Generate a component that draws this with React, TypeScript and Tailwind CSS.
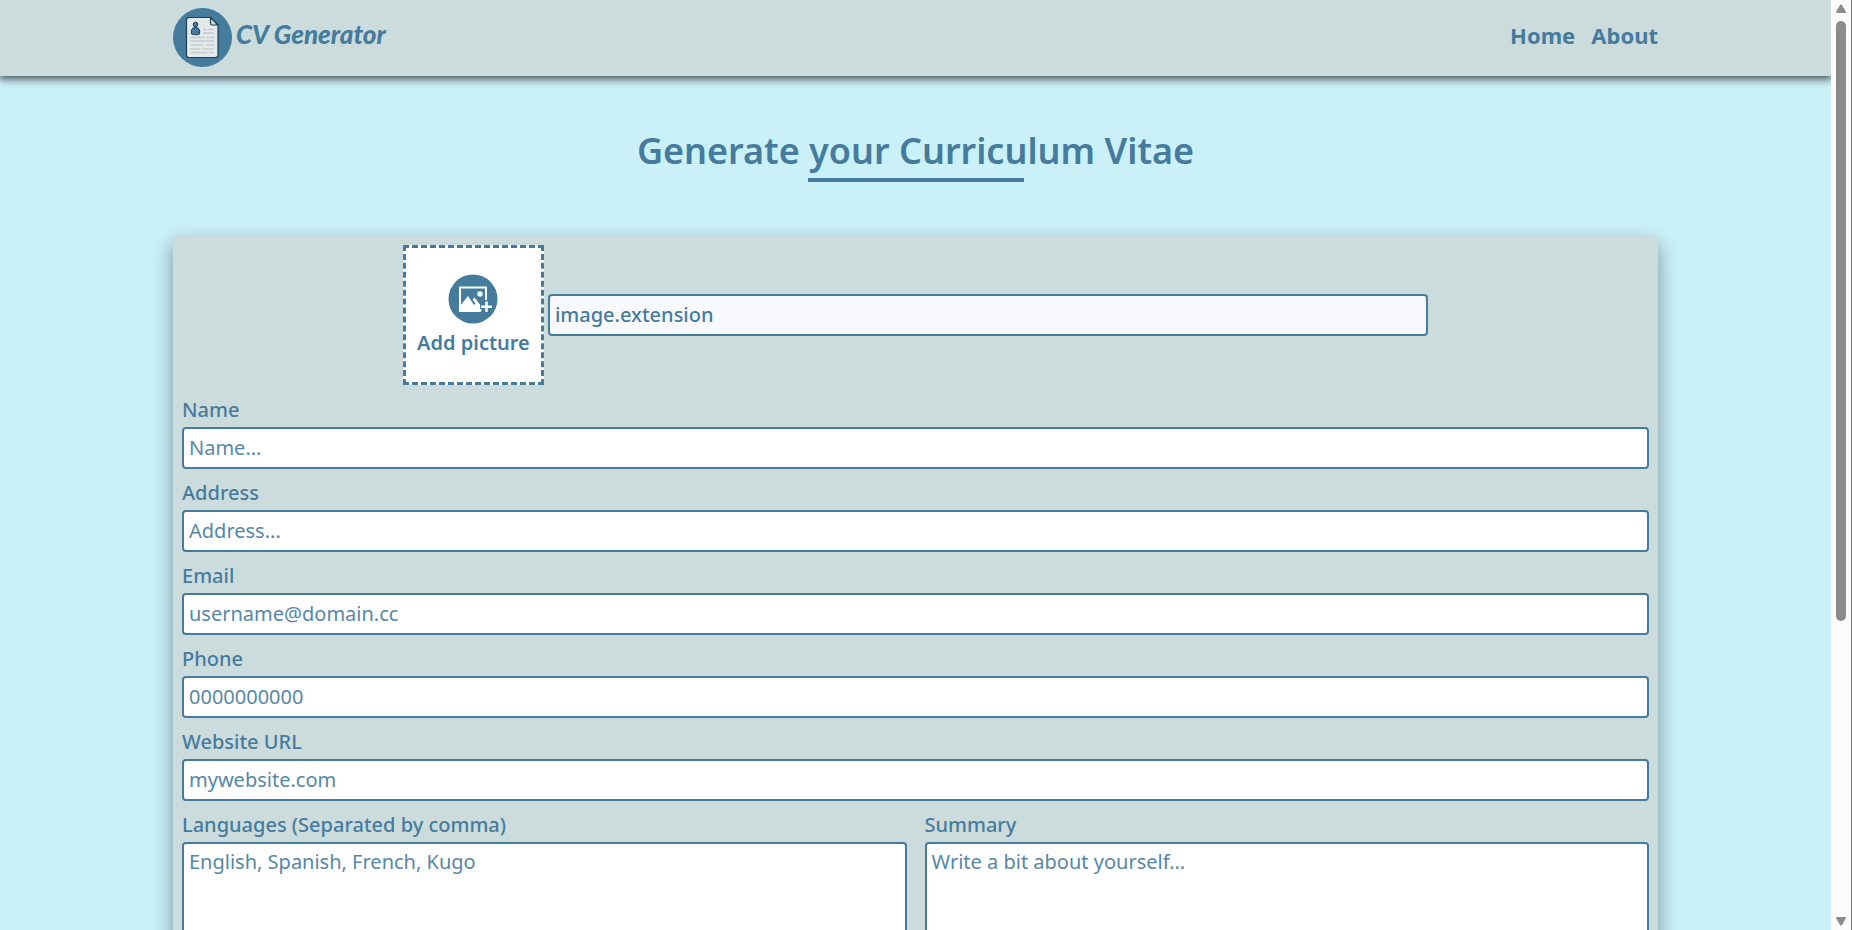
import React from "react";

const control =
  "block w-full rounded-[4px] border-2 border-[#457b9d] bg-white px-[5px] text-[20px] text-[#457b9d] placeholder:text-[#457b9d] placeholder:opacity-90 outline-none";
const labelStyle = "block h-[41px] pt-[9px] text-[20px] leading-[30px] font-medium";

function Logo() {
  return (
    <svg viewBox="0 0 59 59" className="size-[59px] shrink-0" aria-hidden="true">
      <circle cx="29.500" cy="29.500" r="29.500" fill="#457b9d" />
      <path d="M16 9.500h21.500l7.500 7.500v30a2.500 2.500 0 0 1-2.500 2.500H16a2.500 2.500 0 0 1-2.500-2.500V12A2.500 2.500 0 0 1 16 9.500Z" fill="#e4e9ea" stroke="#1d3f53" strokeWidth="1.200" />
      <path d="M37.500 9.500v6a1.500 1.500 0 0 0 1.500 1.500h6Z" fill="#ccdbdc" stroke="#1d3f53" strokeWidth="1.200" />
      <path d="M18.500 26c-.8-4 .7-6 2.500-6.300h3c1.800.3 3.300 2.300 2.500 6.300-2 1-6 1-8 0Z" fill="#457b9d" stroke="#1d3f53" strokeWidth="1" />
      <circle cx="22.500" cy="16.500" r="2.300" fill="#457b9d" stroke="#1d3f53" strokeWidth="1" />
      <path d="M30 21.500h3m1.500 0h6.500M30 25h11M17.500 29.500h14m2 0h7.500M17.500 33h23.500M17.500 37h13.500m2 0h8M17.500 41h10m2 0h11.500M17.500 44.500h17m2 0h4.500" stroke="#c3cbcd" strokeWidth="1.500" />
    </svg>
  );
}

function PictureIcon() {
  return (
    <svg viewBox="0 0 50 50" className="size-[50px]" aria-hidden="true">
      <circle cx="25" cy="25" r="24.500" fill="#457b9d" />
      <path d="M33 37H12V13.500h26V29" fill="none" stroke="#fff" strokeWidth="2" />
      <path d="M12 37v-5l8-10 6 9 1.500-1.500-3-4 2-2 7 9V37Z" fill="#fff" />
      <circle cx="32" cy="20" r="2.700" fill="#fff" />
      <path d="M38.500 26v13M32 32.500h13" stroke="#457b9d" strokeWidth="5" />
      <path d="M38.500 27.500v10.500M33 32.700h11" stroke="#fff" strokeWidth="2.500" />
    </svg>
  );
}

const fields = [
  { id: "name", label: "Name", type: "text", hint: "Name..." },
  { id: "address", label: "Address", type: "text", hint: "Address..." },
  { id: "email", label: "Email", type: "email", hint: "username@domain.cc" },
  { id: "phone", label: "Phone", type: "tel", hint: "0000000000" },
  { id: "website", label: "Website URL", type: "text", hint: "mywebsite.com" },
];

export default function App() {
  return (
    <div className="flex h-screen overflow-hidden bg-[#caf0f8] font-['Noto_Sans',sans-serif] text-[#457b9d]">
      <div className="min-w-0 flex-1 overflow-hidden">
        <header className="relative flex h-[76px] items-center justify-between bg-[#ccdbdc] px-[173px] pb-[2px] shadow-[0_2px_8px_1px_#000a]">
          <a href="#" className="flex items-center gap-1">
            <Logo />
            <span className="pb-[6px] font-['Lato',sans-serif] text-[26px] font-black italic">CV Generator</span>
          </a>
          <nav className="flex gap-4 pb-1 text-[22px] font-bold">
            <a href="#home">Home</a>
            <a href="#about">About</a>
          </nav>
        </header>
        <main className="px-[173px]">
          <div className="flex h-[160px] flex-col items-center pt-[48px]">
            <h1 className="text-[36px] leading-[54px] font-semibold">Generate your Curriculum Vitae</h1>
            <div className="h-1 w-[216px] bg-[#457b9d]" />
          </div>
          <form className="rounded-[5px] bg-[#ccdbdc] p-[9px] shadow-[0_8px_20px_#0006]">
            <div className="mb-px flex items-center justify-center gap-1">
              <button type="button" className="flex h-[140px] w-[141px] shrink-0 flex-col items-center justify-center gap-1 border-3 border-dashed border-[#457b9d] bg-white pt-[2px] text-[20px] leading-[30px] font-semibold">
                <PictureIcon />
                Add picture
              </button>
              <input aria-label="Picture file" readOnly value="image.extension" className="h-[42px] w-[60%] rounded-[4px] border-2 border-[#457b9d] bg-[#f8f9fc] px-[5px] pb-[2px] text-[20px] font-medium outline-none" />
            </div>
            {fields.map((f) => (
              <div key={f.id}>
                <label htmlFor={f.id} className={labelStyle}>{f.label}</label>
                <input id={f.id} type={f.type} placeholder={f.hint} className={control + " h-[42px] pb-[2px]"} />
              </div>
            ))}
            <div className="grid grid-cols-2 gap-[18px]">
              <div>
                <label htmlFor="languages" className={labelStyle}>Languages (Separated by comma)</label>
                <textarea id="languages" placeholder="English, Spanish, French, Kugo" className={control + " h-[160px] resize-none pt-[3px] leading-[30px]"} />
              </div>
              <div>
                <label htmlFor="summary" className={labelStyle}>Summary</label>
                <textarea id="summary" placeholder="Write a bit about yourself..." className={control + " h-[160px] resize-none pt-[3px] leading-[30px]"} />
              </div>
            </div>
          </form>
        </main>
      </div>
      <div className="flex w-[21px] shrink-0 flex-col items-center justify-between border-r border-[#777] bg-[#fcfcfc] pt-1 pb-1" aria-hidden="true">
        <svg viewBox="0 0 10 9" className="h-[9px] w-[10px]"><path d="M4 1q1-1.500 2 0l4 7q0 1-1 1H1q-1 0-1-1Z" fill="#8b8b8b" /></svg>
        <div className="mt-2 w-[10px] basis-[600px] rounded-full bg-[#8b8b8b]" />
        <svg viewBox="0 0 10 9" className="mt-auto h-[9px] w-[10px]"><path d="M4 8q1 1.500 2 0l4-7q0-1-1-1H1Q0 0 0 1Z" fill="#8b8b8b" /></svg>
      </div>
    </div>
  );
}
